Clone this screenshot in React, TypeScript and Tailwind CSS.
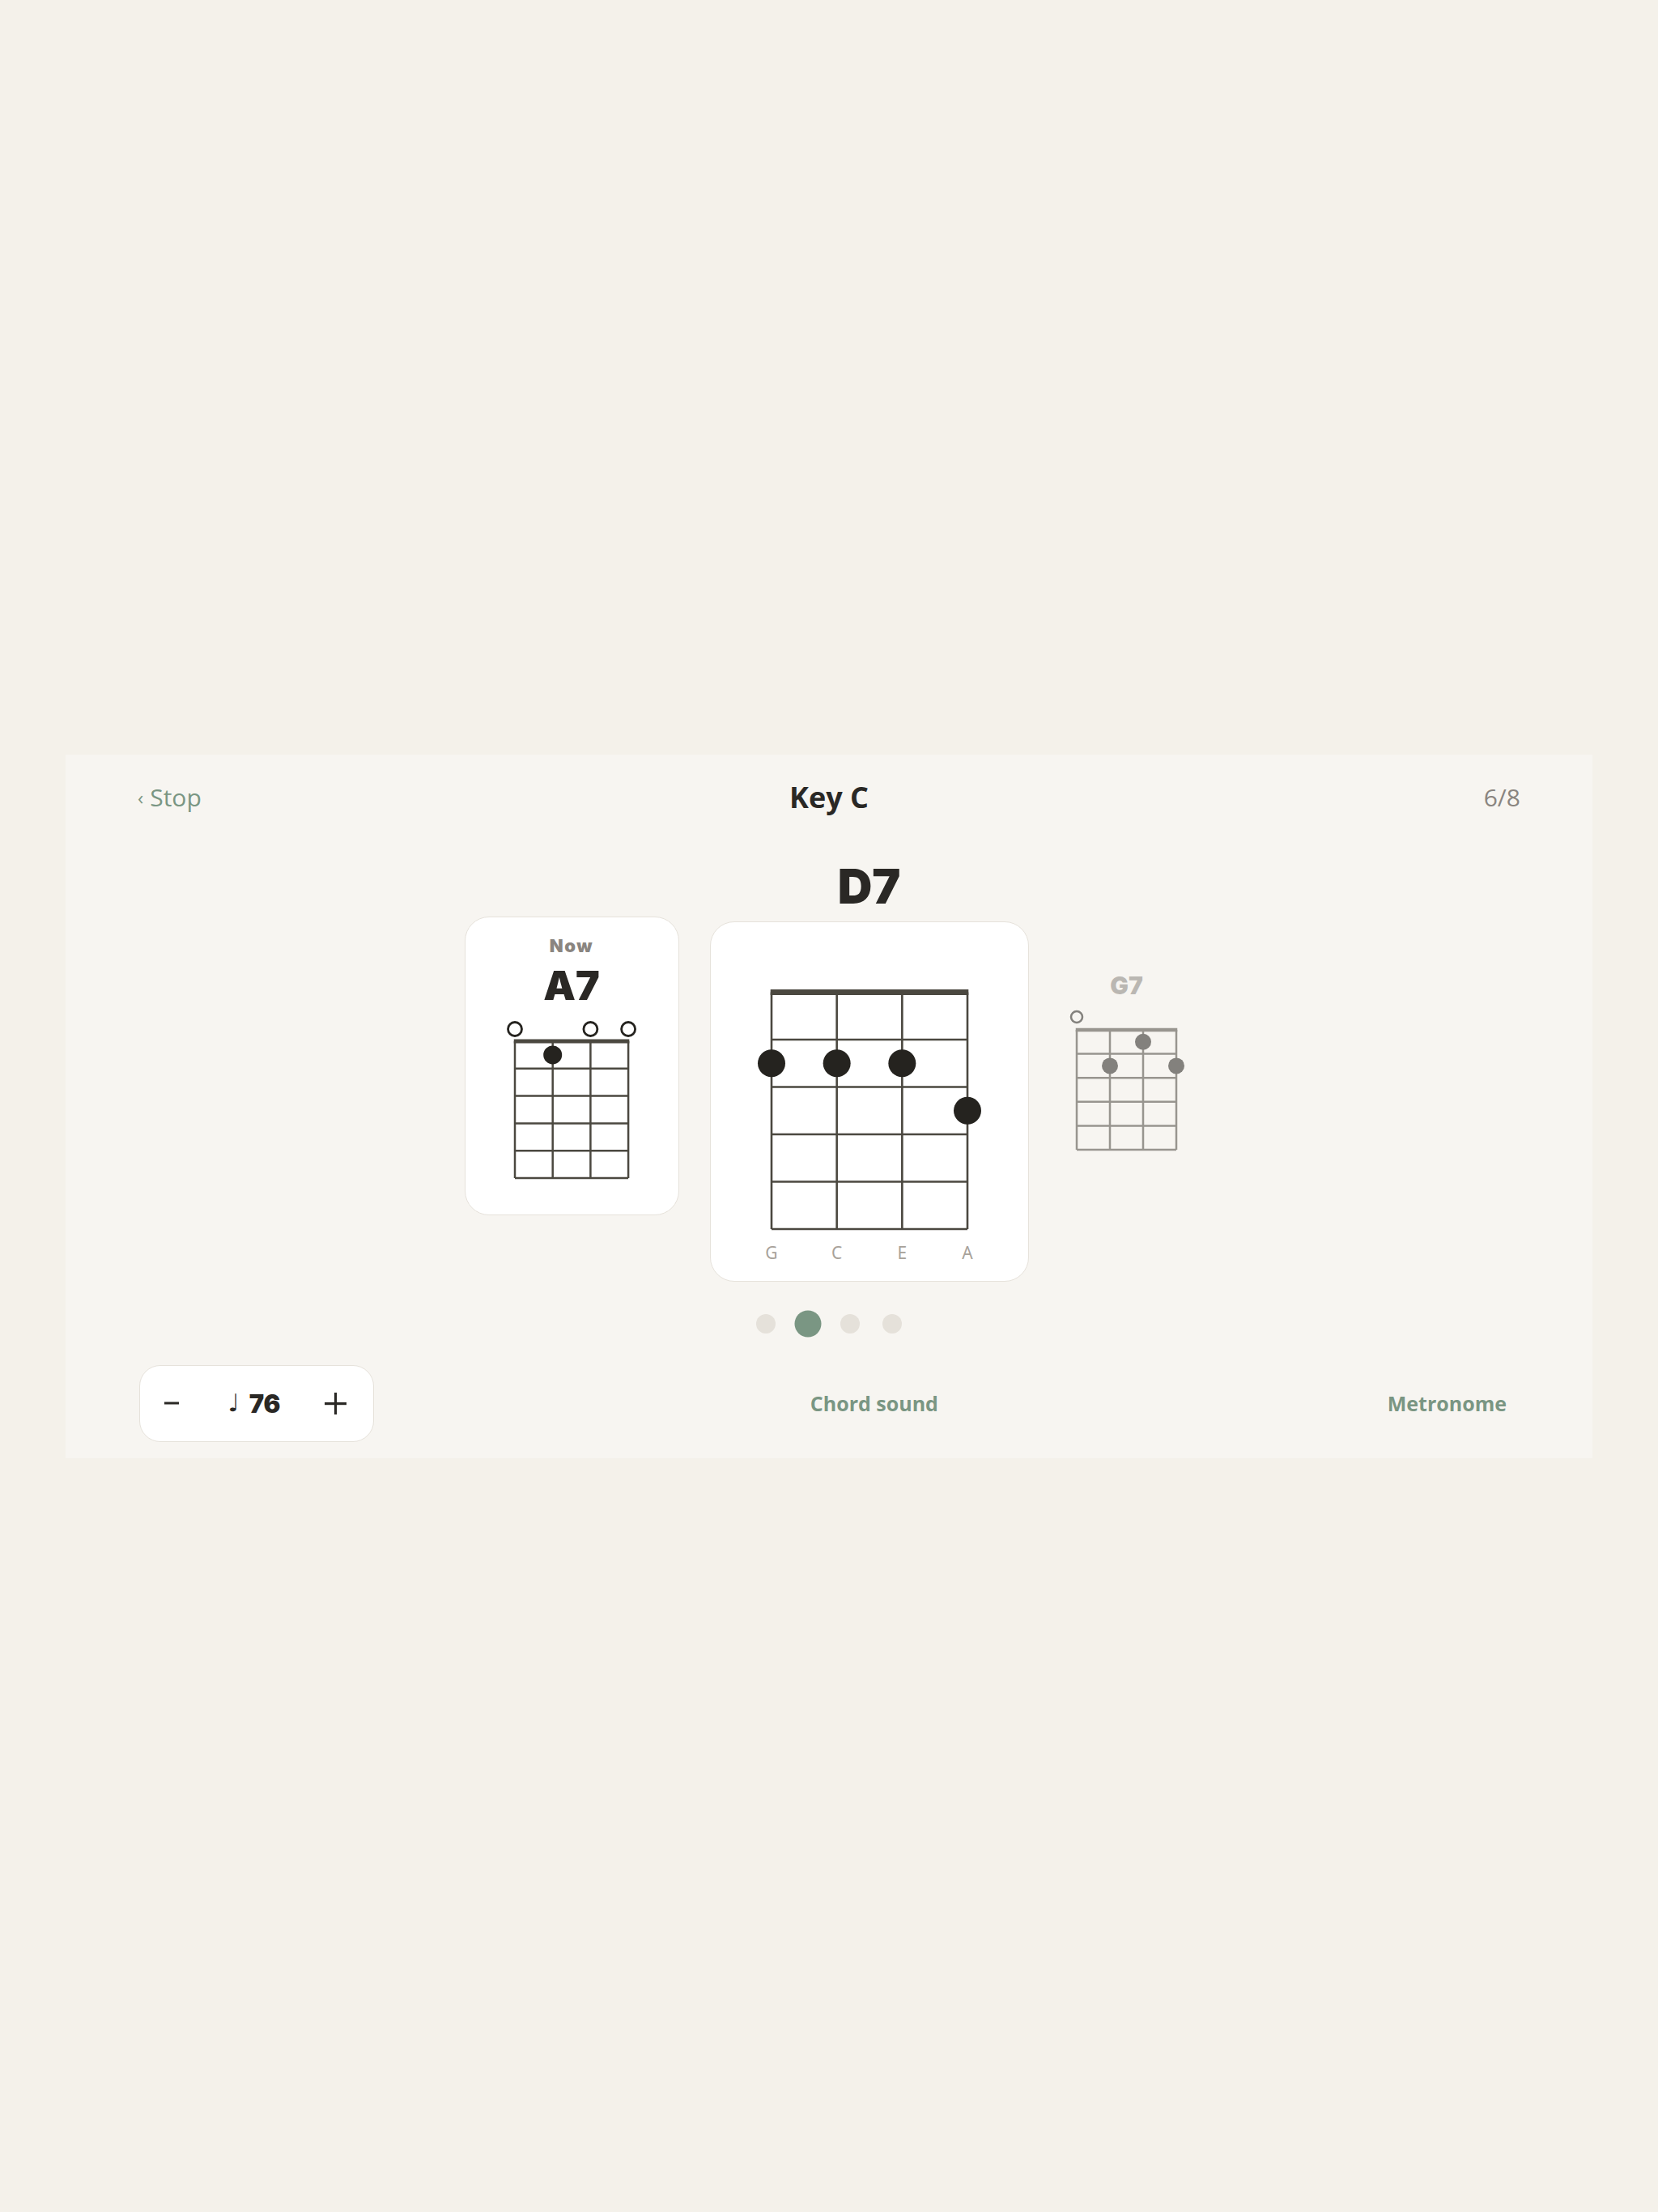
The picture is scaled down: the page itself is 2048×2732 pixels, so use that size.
import React from 'react';

type DiagramProps = {
  frets: number[];
  gap: number;
  fretH: number;
  pad: number;
  nutY: number;
  nut: number;
  line: number;
  dotR: number;
  height: number;
  openR?: number;
  openY?: number;
  openStroke?: number;
  labels?: string[];
  labelY?: number;
};

const LINE = '#4b4840';
const DOT = '#25231f';

// 4-string ukulele box, 5 frets, 0 = open string
const ChordDiagram: React.FC<DiagramProps> = ({
  frets,
  gap,
  fretH,
  pad,
  nutY,
  nut,
  line,
  dotR,
  height,
  openR = 0,
  openY = 0,
  openStroke = 2.5,
  labels,
  labelY = 0,
}) => {
  const width = pad * 2 + gap * 3;
  const xs = [0, 1, 2, 3].map((i) => pad + i * gap);
  const bottom = nutY + fretH * 5;

  return (
    <svg width={width} height={height} viewBox={`0 0 ${width} ${height}`}>
      {xs.map((x, i) => (
        <line key={`s${i}`} x1={x} y1={nutY} x2={x} y2={bottom} stroke={LINE} strokeWidth={line} />
      ))}
      {[1, 2, 3, 4, 5].map((k) => (
        <line
          key={`f${k}`}
          x1={xs[0]}
          x2={xs[3]}
          y1={nutY + fretH * k}
          y2={nutY + fretH * k}
          stroke={LINE}
          strokeWidth={line}
        />
      ))}
      <rect x={xs[0] - line / 2} y={nutY - nut / 2} width={gap * 3 + line} height={nut} fill={LINE} />
      {frets.map((f, i) =>
        f > 0 ? (
          <circle key={`d${i}`} cx={xs[i]} cy={nutY + fretH * (f - 0.5)} r={dotR} fill={DOT} />
        ) : openR ? (
          <circle key={`o${i}`} cx={xs[i]} cy={openY} r={openR} fill="none" stroke={DOT} strokeWidth={openStroke} />
        ) : null
      )}
      {labels?.map((l, i) => (
        <text
          key={`l${i}`}
          x={xs[i]}
          y={labelY}
          textAnchor="middle"
          fontSize={21}
          fill="#a8a29a"
          style={{ fontFamily: '"Noto Sans", sans-serif' }}
        >
          {l}
        </text>
      ))}
    </svg>
  );
};

const heavy = "font-['Inter',sans-serif] font-black";
const body = "font-['Open_Sans',sans-serif]";

export default function App() {
  return (
    <div className="min-h-screen flex items-center justify-center bg-[#f4f1ea]">
      <div className="w-[1886px] bg-[#f7f5f1] flex flex-col pt-[25px] pb-[20px]">
        {/* header */}
        <div className={`grid grid-cols-3 items-center h-[56px] px-[89px] ${body}`}>
          <button className="justify-self-start flex items-center gap-[8px] text-[#7a9683] text-[30px] font-medium leading-none">
            <span className="text-[24px]">‹</span>
            <span>Stop</span>
          </button>
          <div className="justify-self-center text-[36px] font-bold text-[#2a2825] leading-none">Key C</div>
          <div className="justify-self-end text-[30px] text-[#8a8580] leading-none">6/8</div>
        </div>

        {/* chords */}
        <div className="flex justify-center items-start gap-[38px] mt-[52px]">
          <div className="mt-[67px] w-[265px] h-[369px] bg-white border-[1.5px] border-[#e6e2db] rounded-[30px] flex flex-col items-center pt-[24px]">
            <div className={`${heavy} text-[22px] leading-none tracking-[1.5px] text-[#8a8580]`}>Now</div>
            <div className={`${heavy} text-[50px] leading-none text-[#2a2825] mt-[13px]`}>A7</div>
            <div className="mt-[18px]">
              <ChordDiagram
                frets={[0, 1, 0, 0]}
                gap={46.7}
                fretH={33.8}
                pad={12}
                nutY={26}
                nut={5}
                line={2.5}
                dotR={11.5}
                openR={8.5}
                openY={11}
                openStroke={2.8}
                height={200}
              />
            </div>
          </div>

          <div className="flex flex-col items-center">
            <div className={`${heavy} text-[59px] leading-none text-[#2a2825]`}>D7</div>
            <div className="mt-[14px] w-[394px] h-[445px] bg-white border-[1.5px] border-[#e6e2db] rounded-[30px] flex justify-center pt-[83.5px]">
              <ChordDiagram
                frets={[2, 2, 2, 3]}
                gap={80.67}
                fretH={58.5}
                pad={19}
                nutY={3.5}
                nut={7}
                line={2.6}
                dotR={17}
                height={340}
                labels={['G', 'C', 'E', 'A']}
                labelY={333}
              />
            </div>
          </div>

          <div className="mt-[137px] w-[166px] flex flex-col items-center opacity-[0.55]">
            <div className={`${heavy} text-[30px] leading-none text-[#8a8580]`}>G7</div>
            <div className="mt-[14px]">
              <ChordDiagram
                frets={[0, 2, 1, 2]}
                gap={41}
                fretH={29.6}
                pad={12}
                nutY={26}
                nut={4.5}
                line={2.5}
                dotR={10}
                openR={7}
                openY={10}
                openStroke={2.5}
                height={178}
              />
            </div>
          </div>
        </div>

        {/* progress */}
        <div className="flex justify-center items-center gap-[28px] mt-[36px] h-[33px]">
          <span className="w-[24px] h-[24px] rounded-full bg-[#e5e1da]" />
          <span className="w-[24px] h-[24px] rounded-full bg-[#7a9683] scale-[1.375]" />
          <span className="w-[24px] h-[24px] rounded-full bg-[#e5e1da]" />
          <span className="w-[24px] h-[24px] rounded-full bg-[#e5e1da]" />
        </div>

        {/* controls */}
        <div className="flex justify-between items-center mt-[34px] pl-[91px] pr-[90px]">
          <div className="w-[290px] h-[95px] bg-white border-[1.5px] border-[#e6e2db] rounded-[26px] flex items-center justify-between pl-[30px] pr-[33px]">
            <button className="w-[18px] h-[18px] flex items-center">
              <svg width="18" height="4" viewBox="0 0 18 4">
                <rect x="0" y="0.5" width="18" height="3" fill="#2a2825" />
              </svg>
            </button>
            <div className="flex items-center gap-[12px] ml-[6px] text-[#2a2825]">
              <span className="font-['DejaVu_Sans',sans-serif] text-[30px] leading-none">♩</span>
              <span className={`${heavy} text-[31px] leading-none`}>76</span>
            </div>
            <button className="w-[27px] h-[27px] flex items-center">
              <svg width="27" height="27" viewBox="0 0 27 27">
                <rect x="0" y="12" width="27" height="3.2" fill="#2a2825" />
                <rect x="11.9" y="0" width="3.2" height="27" fill="#2a2825" />
              </svg>
            </button>
          </div>
          <button className={`${body} px-[16px] text-[25px] font-bold text-[#7a9683] leading-none`}>Chord sound</button>
          <button className={`${body} px-[16px] text-[25px] font-bold text-[#7a9683] leading-none`}>Metronome</button>
        </div>
      </div>
    </div>
  );
}
